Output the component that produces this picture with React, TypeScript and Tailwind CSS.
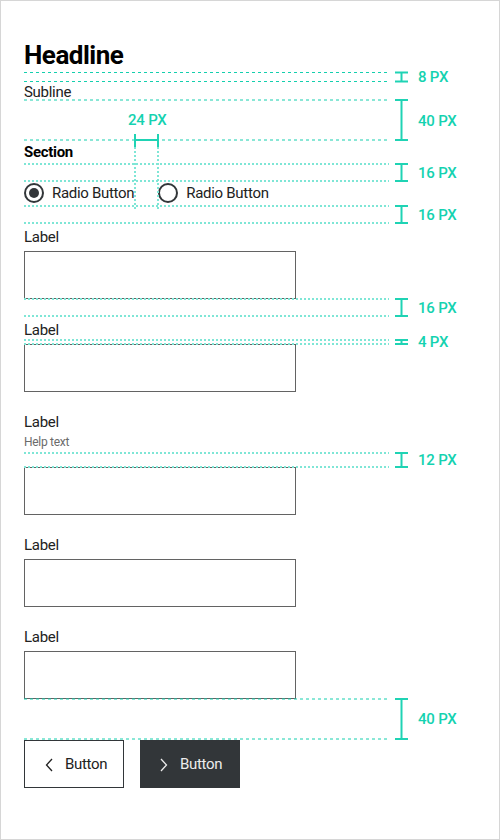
import React from "react";

const teal = "#1fd3b4";
const tealLight = "#7fe6d6";

// pairs of guide lines with their spacing label
const gaps = [
  { y1: 72.5, y2: 81.5, label: "8 PX", top: 68, dark: true },
  { y1: 100, y2: 140, label: "40 PX", top: 112, dark: true },
  { y1: 164, y2: 181, label: "16 PX", top: 164, dark: false },
  { y1: 206, y2: 223, label: "16 PX", top: 206, dark: false },
  { y1: 299, y2: 316, label: "16 PX", top: 299, dark: false },
  { y1: 340, y2: 344, label: "4 PX", top: 333, dark: false },
  { y1: 453, y2: 467, label: "12 PX", top: 451, dark: false },
  { y1: 699, y2: 739, label: "40 PX", top: 710, dark: true },
];

function Guides() {
  return (
    <div className="pointer-events-none absolute inset-0">
      <svg width="500" height="840" className="absolute left-0 top-0">
        <rect x="0.5" y="0.5" width="499" height="839" fill="none" stroke="#d6d6d6" />
        {gaps.map((g, i) => (
          <g key={i}>
            {[g.y1, g.y2].map((y) =>
              g.dark ? (
                <line key={y} x1="24" x2="389" y1={y} y2={y} stroke="#14cfae" strokeWidth="1" strokeDasharray="3 3" />
              ) : (
                <line key={y} x1="24" x2="389" y1={y} y2={y} stroke={tealLight} strokeWidth="2" strokeDasharray="2 2" />
              )
            )}
            <line x1="395" x2="408" y1={g.y1} y2={g.y1} stroke={teal} strokeWidth="2" />
            <line x1="395" x2="408" y1={g.y2} y2={g.y2} stroke={teal} strokeWidth="2" />
            <line x1="401.5" x2="401.5" y1={g.y1} y2={g.y2} stroke={teal} strokeWidth="2" />
          </g>
        ))}
        {/* 24px horizontal gap between radios */}
        <line x1="135" x2="135" y1="147" y2="210" stroke={tealLight} strokeWidth="2" strokeDasharray="2 2" />
        <line x1="158" x2="158" y1="147" y2="210" stroke={tealLight} strokeWidth="2" strokeDasharray="2 2" />
        <line x1="135" x2="158" y1="140" y2="140" stroke={teal} strokeWidth="2" />
        <line x1="135" x2="135" y1="134" y2="147" stroke={teal} strokeWidth="2" />
        <line x1="158" x2="158" y1="134" y2="147" stroke={teal} strokeWidth="2" />
      </svg>
      {gaps.map((g, i) => (
        <span
          key={i}
          className="absolute left-[418px] text-[15px] font-medium leading-[18px] tracking-[-0.2px] text-[#14d2b0]"
          style={{ top: g.top }}
        >
          {g.label}
        </span>
      ))}
      <span className="absolute left-[128px] top-[111px] text-[15px] font-medium leading-[18px] tracking-[-0.2px] text-[#14d2b0]">
        24 PX
      </span>
    </div>
  );
}

function Radio({ checked, label }: { checked?: boolean; label: string }) {
  return (
    <label className="flex items-center gap-2">
      <span className="flex h-5 w-5 items-center justify-center rounded-full border-2 border-[#323639]">
        {checked && <span className="h-2.5 w-2.5 rounded-full bg-[#323639]" />}
      </span>
      <span className="pt-px">{label}</span>
    </label>
  );
}

function Field({ help, className = "" }: { help?: boolean; className?: string }) {
  return (
    <div className={className}>
      {help ? (
        <>
          <div className="pt-px leading-[26px]">Label</div>
          <div className="text-[12px] leading-[15px] tracking-[-0.3px] text-[#6b6b6b]">Help text</div>
          <input className="mt-[17px] block h-12 w-[272px] border border-[#636363] px-3 outline-none" />
        </>
      ) : (
        <>
          <div className="pt-px leading-[27px]">Label</div>
          <input className="block h-12 w-[272px] border border-[#636363] px-3 outline-none" />
        </>
      )}
    </div>
  );
}

function Chevron({ dir }: { dir: "left" | "right" }) {
  return (
    <svg width="8" height="14" viewBox="0 0 8 14" fill="none" stroke="currentColor" strokeWidth="1.3">
      <path d={dir === "left" ? "M7 1 L1.5 7 L7 13" : "M1 1 L6.5 7 L1 13"} />
    </svg>
  );
}

export default function App() {
  return (
    <div className="relative h-[840px] w-[500px] overflow-hidden bg-white font-['Roboto',sans-serif] text-[15px] tracking-[-0.3px] text-[#222]">
      <div className="pl-6 pt-[37px]">
        <h1 className="text-[26px] font-bold leading-[36px] tracking-[-0.5px] text-black">Headline</h1>
        <p className="mt-[9px] leading-[20px]">Subline</p>
        <h2 className="mt-[38px] pt-px font-bold leading-[23px] text-black">Section</h2>
        <div className="mt-4 flex h-[26px] items-center gap-6">
          <Radio checked label="Radio Button" />
          <Radio label="Radio Button" />
        </div>
        <Field className="mt-[17px]" />
        <Field className="mt-[17px]" />
        <Field className="mt-4" help />
        <Field className="mt-4" />
        <Field className="mt-4" />
        <div className="mt-[41px] flex gap-4">
          <button className="flex h-12 w-[100px] items-center gap-3 border border-[#323639] pl-5 pt-px text-[#222]">
            <Chevron dir="left" />
            Button
          </button>
          <button className="flex h-12 w-[100px] items-center gap-3 bg-[#323639] pl-5 pt-px text-[#ececec]">
            <Chevron dir="right" />
            Button
          </button>
        </div>
      </div>
      <Guides />
    </div>
  );
}
